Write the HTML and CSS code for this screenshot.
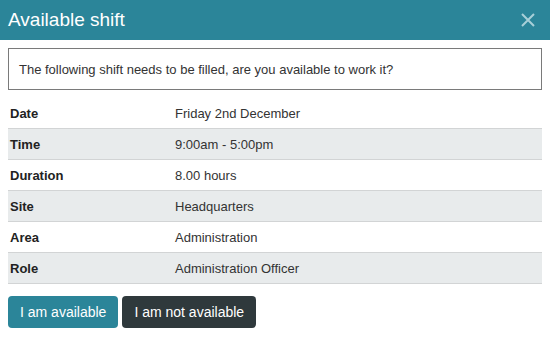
FILE: index.html
```html
<!DOCTYPE html>
<html>
<head>
<meta charset="utf-8">
<link rel="stylesheet" href="styles.css">
</head>
<body>
<div class="modal">
  <div class="modal-header">
    <h1 class="title">Available shift</h1>
    <svg class="close" width="16" height="16" viewBox="0 0 16 16"><path d="M2 2L14 14M14 2L2 14" stroke="#a8cfd8" stroke-width="2" fill="none"/></svg>
  </div>
  <div class="modal-body">
    <div class="message">The following shift needs to be filled, are you available to work it?</div>
    <table class="details">
      <tr><th>Date</th><td>Friday 2nd December</td></tr>
      <tr class="alt"><th>Time</th><td>9:00am - 5:00pm</td></tr>
      <tr><th>Duration</th><td>8.00 hours</td></tr>
      <tr class="alt"><th>Site</th><td>Headquarters</td></tr>
      <tr><th>Area</th><td>Administration</td></tr>
      <tr class="alt"><th>Role</th><td>Administration Officer</td></tr>
    </table>
    <div class="actions">
      <button class="btn btn-primary">I am available</button>
      <button class="btn btn-dark">I am not available</button>
    </div>
  </div>
</div>
</body>
</html>
```
FILE: styles.css
```css
html, body {
  margin: 0;
  padding: 0;
  background: #ffffff;
}
body {
  font-family: "Liberation Sans", Arial, sans-serif;
  font-size: 13px;
  color: #333333;
}
.modal-header {
  height: 40px;
  background: #2b8599;
  display: flex;
  align-items: center;
  justify-content: space-between;
  padding: 0 14px 0 8px;
}
.title {
  margin: 0;
  font-size: 19px;
  font-weight: normal;
  color: #ffffff;
}
.close {
  display: block;
}
.modal-body {
  padding: 8px;
}
.message {
  border: 1px solid #7a7a7a;
  height: 40px;
  box-sizing: content-box;
  padding: 0 10px;
  display: flex;
  align-items: center;
}
.details {
  margin-top: 8px;
  width: 100%;
  border-collapse: collapse;
}
.details th, .details td {
  height: 30px;
  padding: 0 2px;
  border-bottom: 1px solid #d2d4d5;
  text-align: left;
  color: #222222;
}
.details th {
  width: 161px;
  font-weight: bold;
}
.details td {
  font-weight: normal;
  color: #333333;
}
.details tr.alt {
  background: #e8ebec;
}
.actions {
  display: flex;
  gap: 4px;
  margin-top: 12px;
}
.btn {
  height: 32px;
  padding: 0 12px;
  border: none;
  border-radius: 4px;
  color: #ffffff;
  font-family: "Liberation Sans", Arial, sans-serif;
  font-size: 14px;
}
.btn-primary {
  background: #2b8599;
}
.btn-dark {
  background: #2f393c;
}
```
